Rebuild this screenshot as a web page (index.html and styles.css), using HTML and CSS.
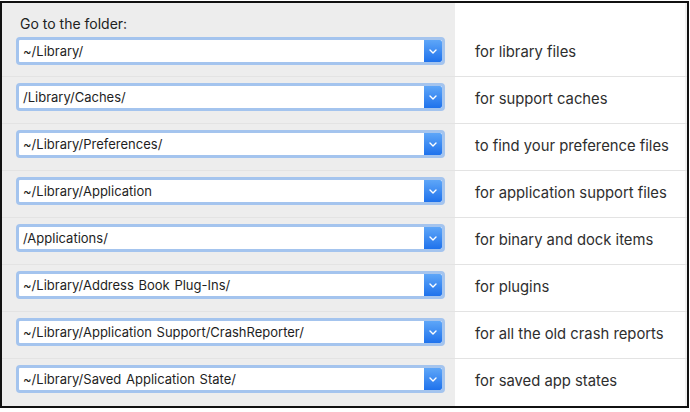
FILE: index.html
```html
<!DOCTYPE html>
<html>
<head>
<meta charset="utf-8">
<link rel="stylesheet" href="styles.css">
</head>
<body>
<div class="frame">
  <div class="row head">
    <div class="left">
      <div class="label">Go to the folder:</div>
      <div class="combo"><span class="field">~/Library/</span><span class="btn"><svg viewBox="0 0 8 5" width="8" height="5"><path d="M1 1 L4 4 L7 1" fill="none" stroke="#fff" stroke-width="1.4" stroke-linecap="round" stroke-linejoin="round"/></svg></span></div>
    </div>
    <div class="right">for library files</div>
  </div>
  <div class="row">
    <div class="left"><div class="combo"><span class="field">/Library/Caches/</span><span class="btn"><svg viewBox="0 0 8 5" width="8" height="5"><path d="M1 1 L4 4 L7 1" fill="none" stroke="#fff" stroke-width="1.4" stroke-linecap="round" stroke-linejoin="round"/></svg></span></div></div>
    <div class="right">for support caches</div>
  </div>
  <div class="row">
    <div class="left"><div class="combo"><span class="field">~/Library/Preferences/</span><span class="btn"><svg viewBox="0 0 8 5" width="8" height="5"><path d="M1 1 L4 4 L7 1" fill="none" stroke="#fff" stroke-width="1.4" stroke-linecap="round" stroke-linejoin="round"/></svg></span></div></div>
    <div class="right">to find your preference files</div>
  </div>
  <div class="row">
    <div class="left"><div class="combo"><span class="field">~/Library/Application</span><span class="btn"><svg viewBox="0 0 8 5" width="8" height="5"><path d="M1 1 L4 4 L7 1" fill="none" stroke="#fff" stroke-width="1.4" stroke-linecap="round" stroke-linejoin="round"/></svg></span></div></div>
    <div class="right">for application support files</div>
  </div>
  <div class="row">
    <div class="left"><div class="combo"><span class="field">/Applications/</span><span class="btn"><svg viewBox="0 0 8 5" width="8" height="5"><path d="M1 1 L4 4 L7 1" fill="none" stroke="#fff" stroke-width="1.4" stroke-linecap="round" stroke-linejoin="round"/></svg></span></div></div>
    <div class="right">for binary and dock items</div>
  </div>
  <div class="row">
    <div class="left"><div class="combo"><span class="field">~/Library/Address Book Plug-Ins/</span><span class="btn"><svg viewBox="0 0 8 5" width="8" height="5"><path d="M1 1 L4 4 L7 1" fill="none" stroke="#fff" stroke-width="1.4" stroke-linecap="round" stroke-linejoin="round"/></svg></span></div></div>
    <div class="right">for plugins</div>
  </div>
  <div class="row">
    <div class="left"><div class="combo"><span class="field">~/Library/Application Support/CrashReporter/</span><span class="btn"><svg viewBox="0 0 8 5" width="8" height="5"><path d="M1 1 L4 4 L7 1" fill="none" stroke="#fff" stroke-width="1.4" stroke-linecap="round" stroke-linejoin="round"/></svg></span></div></div>
    <div class="right">for all the old crash reports</div>
  </div>
  <div class="row last">
    <div class="left"><div class="combo"><span class="field">~/Library/Saved Application State/</span><span class="btn"><svg viewBox="0 0 8 5" width="8" height="5"><path d="M1 1 L4 4 L7 1" fill="none" stroke="#fff" stroke-width="1.4" stroke-linecap="round" stroke-linejoin="round"/></svg></span></div></div>
    <div class="right">for saved app states</div>
  </div>
</div>
</body>
</html>
```
FILE: styles.css
```css
html, body {
  margin: 0;
  padding: 0;
  background: #fff;
}
body {
  font-family: Inter, "Liberation Sans", Arial, sans-serif;
  color: #2a2a2a;
}
.frame {
  margin-top: 1px;
  width: 689px;
  height: 407px;
  box-sizing: border-box;
  border: 2px solid #111;
  display: flex;
  flex-direction: column;
  overflow: hidden;
}
.row {
  display: grid;
  grid-template-columns: 453px 1fr;
  height: 47px;
  border-top: 1px solid #e3e3e3;
  box-sizing: border-box;
  flex: none;
}
.row.head {
  border-top: none;
  height: 73px;
}
.row.last {
  flex: 1;
}
.left {
  background: #ededed;
  display: flex;
  flex-direction: column;
  justify-content: flex-start;
  padding-left: 14px;
  padding-top: 6px;
}
.head .left {
  padding-top: 12px;
}
.label {
  font-size: 14px;
  line-height: 17px;
  padding-left: 4px;
  margin-bottom: 5px;
  color: #222;
}
.right {
  display: flex;
  align-items: center;
  padding-left: 20px;
  padding-bottom: 3px;
  font-size: 14.8px;
  color: #2e2e2e;
  border-right: 2px solid #f0f0f0;
}
.head .right {
  align-items: flex-end;
  padding-bottom: 15px;
}
.combo {
  width: 429px;
  height: 28px;
  box-sizing: border-box;
  border: 3px solid #a4c4ee;
  border-radius: 4px;
  background: #fff;
  display: flex;
  align-items: stretch;
}
.field {
  flex: 1;
  font-size: 13px;
  line-height: 22px;
  padding-left: 4px;
  color: #1e1e1e;
  white-space: nowrap;
  word-spacing: 1px;
}
.btn {
  width: 18px;
  background: linear-gradient(#5ea6f8, #1f72ec);
  border-radius: 0 2px 2px 0;
  display: flex;
  align-items: center;
  justify-content: center;
}
.btn svg {
  display: block;
}
```
